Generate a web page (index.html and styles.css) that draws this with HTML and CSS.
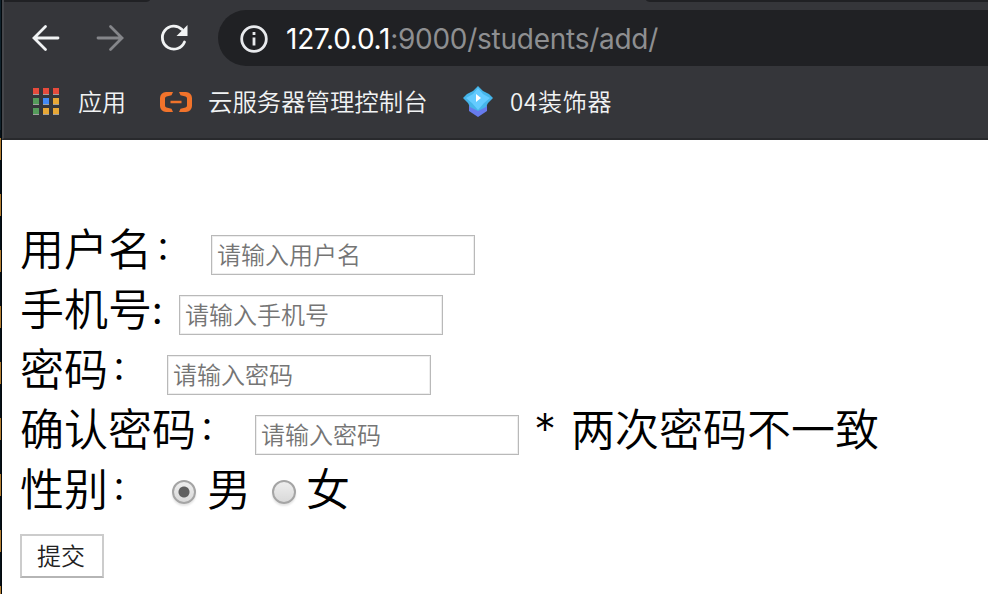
FILE: index.html
```html
<!DOCTYPE html>
<html lang="zh-CN">
<head>
<meta charset="utf-8">
<title>students</title>
<link rel="stylesheet" href="styles.css">
</head>
<body>
<div class="desktop">
  <div class="edge"></div>
  <div class="window">
    <header class="chrome">
      <div class="tabs"><i class="tab-left"></i><i class="tab-right"></i></div>
      <div class="toolbar">
        <svg class="nav" viewBox="0 0 28 28"><path d="M26 14H2.500M13.500 2.500L2 14l11.500 11.500"/></svg>
        <svg class="nav dim" viewBox="0 0 28 28"><path d="M2 14h23.500M14.500 2.500L26 14 14.500 25.500"/></svg>
        <svg class="nav reload" viewBox="0 0 28 28"><path d="M24.500 18A11.500 11.500 0 1 1 22 5.500"/><path class="solid" d="M27.500 1v11H16.500z"/></svg>
        <div class="address">
          <svg class="info" viewBox="0 0 28 28"><circle cx="14" cy="14" r="12.300"/><path d="M14 12.500v8M14 7v3"/></svg>
          <span class="url"><b>127.0.0.1</b>:9000/students/add/</span>
        </div>
      </div>
      <nav class="bookmarks">
        <div class="apps"><i class="r"></i><i class="r"></i><i class="r"></i><i class="g"></i><i class="b"></i><i class="y"></i><i class="g"></i><i class="y"></i><i class="y"></i></div>
        <span class="bm-apps">应用</span>
        <svg class="cloud" viewBox="0 0 32 20"><path d="M13 0H6a6 6 0 0 0-6 6v8a6 6 0 0 0 6 6h7l-1.500-3.200-5-1.300A2 2 0 0 1 5 13.500v-7a2 2 0 0 1 1.500-2l5-1.300zM19 0h7a6 6 0 0 1 6 6v8a6 6 0 0 1-6 6h-7l1.500-3.200 5-1.300a2 2 0 0 0 1.500-2v-7a2 2 0 0 0-1.500-2l-5-1.300zM10.500 8.800h11v2.400h-11z"/></svg>
        <span class="bm-cloud">云服务器管理控制台</span>
        <svg class="gem" viewBox="0 0 32 32"><path fill="#667bed" d="M7 19l9 5 9-5v6l-9 6-9-6z"/><path fill="#45b5e9" d="M16 0l5 5 6 3 4 4-5 5-2 4-8 4-8-4-2-4-5-5 4-4 6-3z"/><path fill="#64cbff" d="M16 2l5 6 7 4-6 5-6 7-6-7-6-5 7-4z"/><path fill="#fff" d="M14 8l5 4-5 4z"/></svg>
        <span class="bm-gem">04装饰器</span>
      </nav>
    </header>
    <form class="page">
      <div class="row"><label class="label user">用户名<span class="colon">：</span></label><input type="text" placeholder="请输入用户名"></div>
      <div class="row"><label class="label phone">手机号<span class="colon narrow">:</span></label><input type="text" placeholder="请输入手机号"></div>
      <div class="row"><label class="label pass">密码<span class="colon">：</span></label><input type="text" placeholder="请输入密码"></div>
      <div class="row"><label class="label confirm">确认密码<span class="colon">：</span></label><input type="text" placeholder="请输入密码"><span class="star">*</span><span class="error">两次密码不一致</span></div>
      <div class="row"><label class="label sex">性别<span class="colon">：</span></label><i class="radio on"></i><span class="male">男</span><i class="radio"></i><span class="female">女</span></div>
      <button type="button">提交</button>
    </form>
  </div>
</div>
</body>
</html>
```
FILE: styles.css
```css
* { box-sizing: border-box; }
body { margin: 0; overflow: hidden; font-family: "Noto Sans CJK SC", sans-serif; }
.desktop { display: flex; width: 988px; height: 594px; background: #fff; }
.edge {
  width: 2px; flex: none; border-right: 1px solid #02080c;
  background: linear-gradient(#10222c 0 130px, transparent 130px),
    repeating-linear-gradient(#051018 0 26px, #b27c30 26px 48px, #051018 48px 56px);
}
.window { flex: 1; min-width: 0; }
.chrome { height: 140px; background: #35363a; border-bottom: 2px solid #28292c; border-left: 2px solid #45464a; }
.tabs { display: flex; justify-content: space-between; height: 2px; }
.tabs i { background: #202124; }
.tab-left { width: 146px; border-bottom-right-radius: 6px 2px; }
.tab-right { width: 342px; border-bottom-left-radius: 6px 2px; }
.toolbar { display: flex; align-items: center; height: 72px; padding-left: 28px; }
.nav { width: 28px; height: 28px; margin-right: 36px; flex: none; fill: none; stroke: #f1f3f4; stroke-width: 2.8; stroke-linecap: round; }
.nav.dim { stroke: #85868a; }
.nav.reload { margin-right: 30px; }
.nav .solid { fill: #f1f3f4; stroke: none; }
.address { flex: 1; display: flex; align-items: center; height: 56px; padding-left: 22px; border-radius: 28px 0 0 28px; background: #202124; }
.info { width: 28px; height: 28px; margin: 1px 18px 0 0; fill: none; stroke: #e8eaed; stroke-width: 2.8; }
.url { margin-top: 1px; color: #8e8f91; font: 28px/40px Inter, sans-serif; letter-spacing: -.26px; white-space: nowrap; }
.url b { font-weight: 400; color: #fff; }
.bookmarks { display: flex; align-items: center; height: 54px; padding-left: 29px; color: #f1f3f4; font-size: 24px; line-height: 36px; white-space: nowrap; }
.bookmarks svg { margin-top: 2px; }
.apps { display: grid; grid-template-columns: repeat(3, 6px); gap: 3px 4px; width: 26px; margin-right: 19px; }
.apps i { height: 7px; border-bottom: 1px solid #a0a0a0; }
.r { background: #e64b3c; } .g { background: #559c5b; } .b { background: #438af5; } .y { background: #e8a735; }
.bm-apps { width: 82px; }
.bm-apps, .bm-cloud, .bm-gem { font-weight: 350; }
.cloud { width: 32px; height: 20px; margin-right: 16px; fill: #f1732b; }
.bm-cloud { width: 254px; font-size: 24.4px; }
.gem { width: 32px; height: 32px; margin-right: 16px; }
.bm-gem { letter-spacing: .8px; }
.page { padding: 79px 0 0 18px; }
.row { display: flex; align-items: center; height: 60px; font-size: 44px; font-weight: 350; line-height: 56px; color: #000; white-space: nowrap; }
.label, .error, .male, .female { flex: none; height: 60px; }
.label { display: flex; }
.colon { width: 44px; padding-left: 3px; font-size: 32px; font-weight: 400; line-height: 52px; }
.colon.narrow { padding-left: 0; font-size: 38px; line-height: 58px; }
.user { width: 191px; }
.phone { width: 159px; }
.pass { width: 147px; }
.confirm { width: 235px; }
.sex { width: 152px; }
.row input {
  width: 264px; height: 40px; margin: 12px 0 0; padding: 0 5px 3px; flex: none;
  border: 1px solid #b9b9b9; border-radius: 0; background: #fff; box-shadow: inset 0 0 0 1px #eee;
  font: 350 24px/34px "Noto Sans CJK SC", sans-serif; outline: 0;
}
.row input::placeholder { color: #757575; opacity: 1; }
.star { width: 38px; margin-left: 15px; font-family: Inter, sans-serif; font-weight: 300; }
.radio { width: 24px; height: 24px; margin-top: 6px; border: 2px solid #a5a5a5; border-radius: 50%; background: linear-gradient(#eee, #d9d9d9); box-shadow: 0 2px 2px #e5e5e5; }
.radio.on { background: radial-gradient(circle, #606060 0 5px, transparent 6px), linear-gradient(#eee, #d9d9d9); }
.male { width: 65px; margin-left: 11px; }
.error { margin-left: -1px; }
.female { margin-left: 10px; }
button { display: block; width: 84px; height: 44px; margin-top: 15px; padding: 0 2px 3px 0; border: 2px solid #ccc; border-bottom-color: #b5b5b5; background: #fff; color: #222; font: 350 24px/36px "Noto Sans CJK SC", sans-serif; }
```
